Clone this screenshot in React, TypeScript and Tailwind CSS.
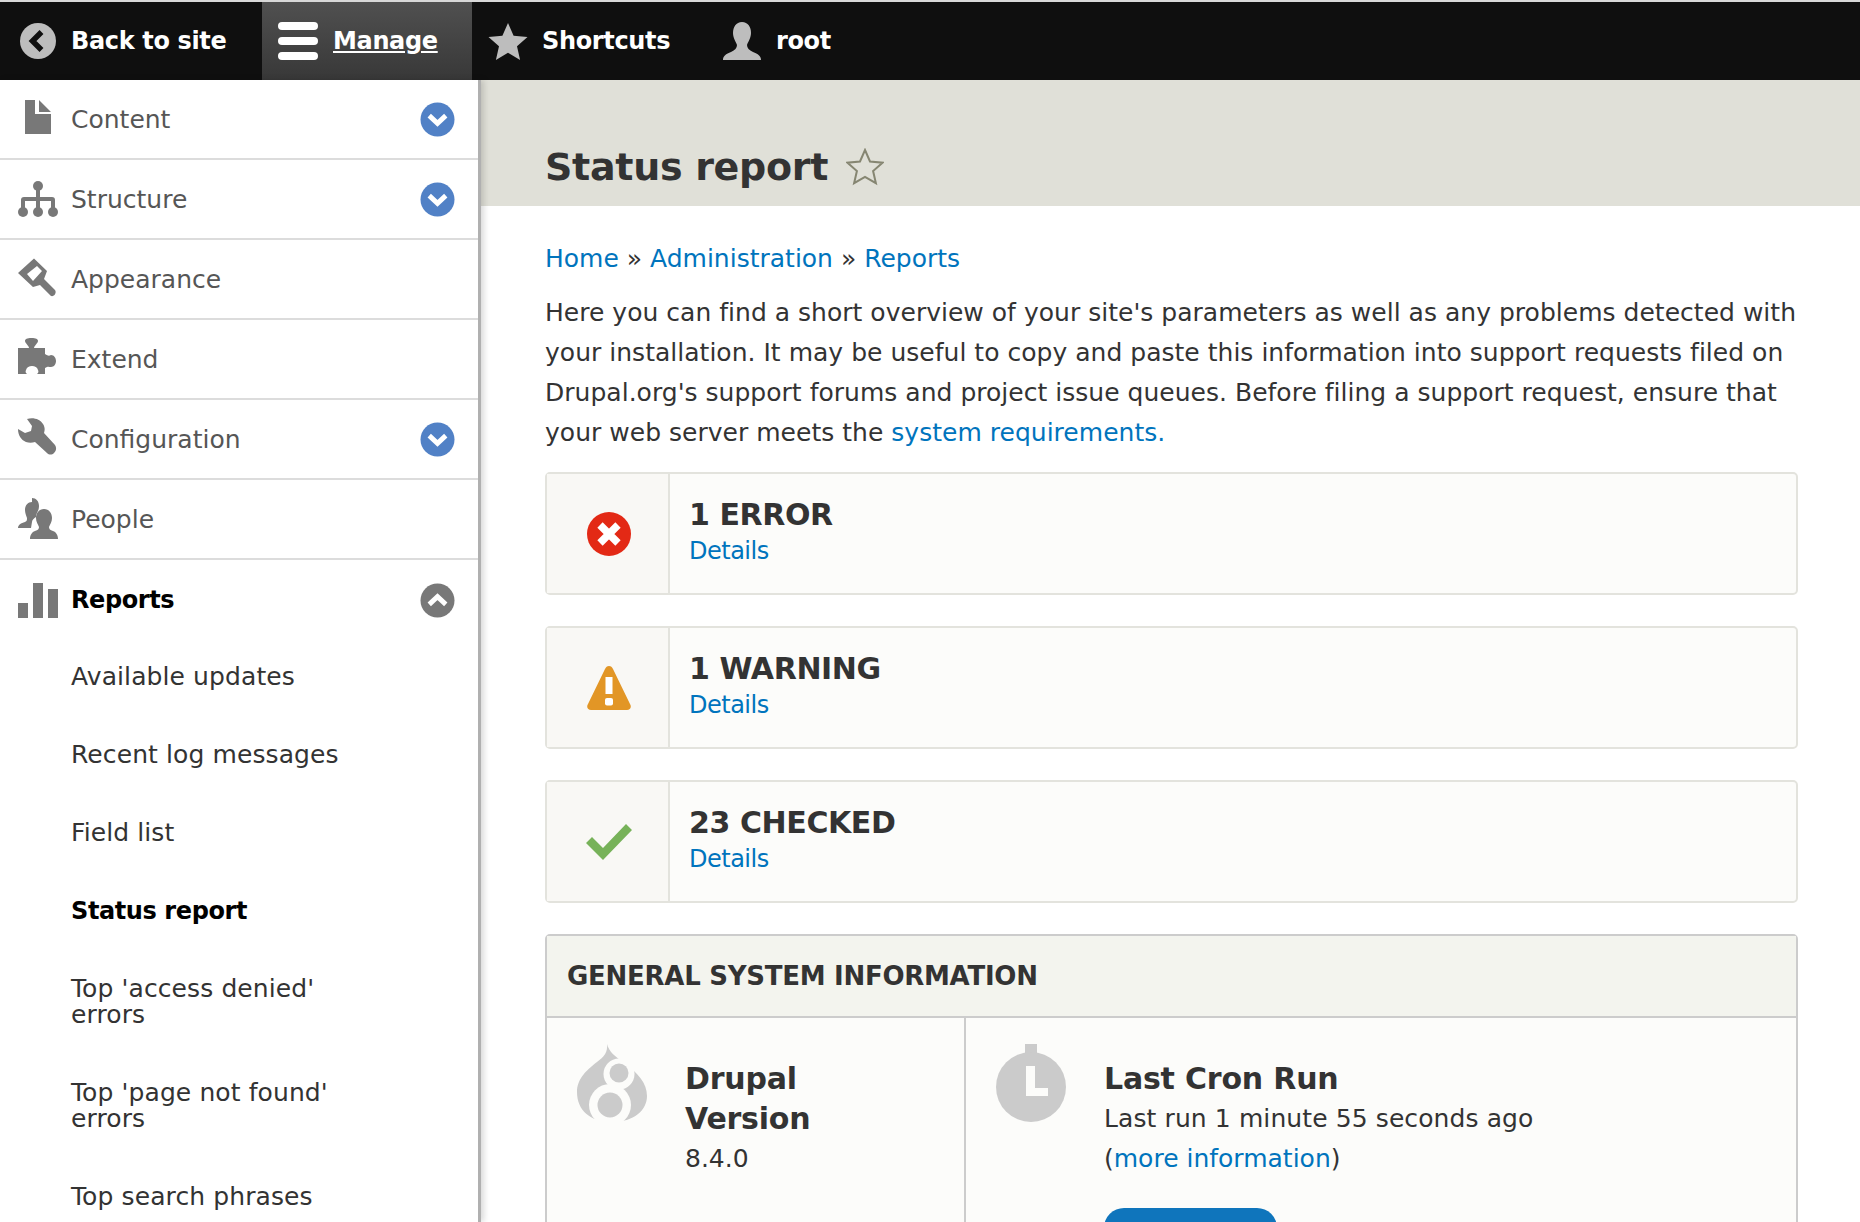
import type { ReactNode } from "react";

const Chevron = ({ up }: { up?: boolean }) => (
  <svg viewBox="0 0 36 36" className="size-[35px]">
    <circle cx="18" cy="18" r="17.5" fill={up ? "#787878" : "#5181c6"} />
    <path d={up ? "M9.5 22l8.5-8 8.5 8" : "M9.5 14l8.5 8 8.5-8"} fill="none" stroke="#fff" strokeWidth="5" />
  </svg>
);

const icons: Record<string, ReactNode> = {
  Content: <path d="M7 2h10v14h16v20H7z M21 2l12 12H21z" />,
  Structure: (
    <>
      <circle cx="20" cy="8" r="5" />
      <circle cx="5" cy="34" r="5" />
      <circle cx="20" cy="34" r="5" />
      <circle cx="35" cy="34" r="5" />
      <path d="M18 10h4v9h12a3 3 0 0 1 3 3v10h-4v-9H22v9h-4v-9H7v9H3V22a3 3 0 0 1 3-3h12z" />
    </>
  ),
  Appearance: <path fillRule="evenodd" d="M0 15L16 .5 29 13l-3 8 11 11c2 3-1 7-4 6L22 27l-7 2z M9 16l10-8 5 5-9 10z" />,
  Extend: <path d="M0 10h11c0-2-4-5-4-7 0-2 2-3 6.500-3s6.500 1 6.500 3c0 2-4 5-4 7h11v6c3 2 4 2 6 1 3 0 5 3 5 6s-2 6-5 6c-2 0-3-1-6 1v6H19c1-1 2-2 1-4-1-3-3-4-6-4s-5 1-6 4c-1 2 0 3 1 4H0z" />,
  Configuration: <path d="M9 1c6-2 13 0 16 5 2 3 2 6 1 9l11 12c2 3 1 6-1 8s-5 2-7 0L17 24c-3 1-6 1-9 0-5-2-8-7-8-13l7 4 6-2 1-5z" />,
  People: (
    <>
      <path d="M14 0c4 0 7 3 7 8 0 3-1 5-2 7-1 2-1 3-1 4-2 1-4 3-4 5l-1 6H0c0-3 3-5 7-6 2-1 2-2 2-4-1-3-2-5-2-8 0-5 3-8 7-8z" />
      <path d="M26 11c5 0 8 4 8 9 0 4-2 6-3 9 0 2 1 3 4 4 3 1 5 4 5 8H12c0-4 2-7 5-8 3-1 4-2 4-4-1-3-3-5-3-9 0-5 3-9 8-9z" />
    </>
  ),
  Reports: <path d="M0 24h10v15H0z M15 4h10v35H15z M30 10h10v29H30z" />,
};

const NavIcon = ({ name }: { name: string }) => (
  <svg viewBox="0 0 40 42" className="h-[42px] w-10 shrink-0" fill="#787878">
    {icons[name]}
  </svg>
);

const navItems = [
  { name: "Content", chevron: true },
  { name: "Structure", chevron: true },
  { name: "Appearance" },
  { name: "Extend" },
  { name: "Configuration", chevron: true },
  { name: "People" },
];

const subItems = [
  ["Available updates"],
  ["Recent log messages"],
  ["Field list"],
  ["Status report"],
  ["Top 'access denied'", "errors"],
  ["Top 'page not found'", "errors"],
  ["Top search phrases"],
];

const Topbar = () => (
  <header className="flex h-20 shrink-0 items-stretch border-t-2 border-[#d8d8d8] bg-[#0f0f0f] text-[24px] leading-none font-bold tracking-[-0.35px] text-white">
    <a className="flex w-[262px] items-center pl-5">
      <svg viewBox="0 0 36 36" className="size-9">
        <circle cx="18" cy="18" r="18" fill="#bdbdbd" />
        <path d="M21.5 9l-9 9 9 9" fill="none" stroke="#0f0f0f" strokeWidth="5.5" />
      </svg>
      <span className="ml-[15px]">Back to site</span>
    </a>
    <a className="flex w-[210px] items-center bg-gradient-to-b from-[#505050] to-[#383838] pl-4">
      <span className="flex w-10 flex-col gap-[7px]">
        <span className="h-2 rounded bg-white" />
        <span className="h-2 rounded bg-white" />
        <span className="h-2 rounded bg-white" />
      </span>
      <span className="ml-[15px] underline underline-offset-2">Manage</span>
    </a>
    <a className="flex w-[235px] items-center pl-4">
      <svg viewBox="0 0 40 38" className="h-[38px] w-10">
        <path d="M20 1l5.6 12.8 13.9 1.3-10.5 9.2 3.1 13.6L20 30.8 7.9 37.9 11 24.3.5 15.1l13.9-1.3z" fill="#bdbdbd" />
      </svg>
      <span className="ml-[14px]">Shortcuts</span>
    </a>
    <a className="flex items-center pl-4">
      <svg viewBox="0 0 38 38" className="size-[38px]">
        <path d="M19 0c6 0 9 5 9 11 0 5-3 9-4 12 0 3 2 5 6 7 5 2 8 4 8 8H0c0-4 3-6 8-8 4-2 6-4 6-7-1-3-4-7-4-12 0-6 3-11 9-11z" fill="#bdbdbd" />
      </svg>
      <span className="ml-[15px]">root</span>
    </a>
  </header>
);

const Sidebar = () => (
  <aside className="relative z-10 w-[481px] shrink-0 border-r-[3px] border-[#b0b0b0] bg-white text-[25px] text-[#565656] shadow-[3px_0_6px_rgba(0,0,0,0.15)]">
    <ul>
      {navItems.map(({ name, chevron }) => (
        <li key={name} className="flex h-20 items-center border-b-2 border-[#dcdcdc] pr-[23px] pl-[18px]">
          <NavIcon name={name} />
          <span className="ml-[13px] flex-1 pt-[2px]">{name}</span>
          {chevron && <Chevron />}
        </li>
      ))}
      <li className="flex h-20 items-center pr-[23px] pl-[18px] text-[24px] font-bold tracking-[-0.4px] text-black">
        <NavIcon name="Reports" />
        <span className="ml-[13px] flex-1">Reports</span>
        <Chevron up />
      </li>
    </ul>
    <ul className="-mt-[2px] pl-[71px] leading-[26px] tracking-[0.1px] text-[#333]">
      {subItems.map((lines) => (
        <li key={lines[0]} className={`py-[26px] ${lines[0] === "Status report" ? "text-[24px] font-bold tracking-[-0.4px] text-black" : ""}`}>
          {lines.map((line) => (
            <div key={line}>{line}</div>
          ))}
        </li>
      ))}
    </ul>
  </aside>
);

const summaries = [
  {
    title: "1 ERROR",
    icon: (
      <svg viewBox="0 0 44 44" className="size-11">
        <circle cx="22" cy="22" r="22" fill="#e32915" />
        <path d="M13 13l18 18M31 13L13 31" stroke="#fff" strokeWidth="7.5" />
      </svg>
    ),
  },
  {
    title: "1 WARNING",
    icon: (
      <svg viewBox="0 0 44 44" className="size-11">
        <path d="M22 0c2 0 3 1 4 3l17 35c2 3 0 6-3 6H4c-3 0-5-3-3-6L18 3c1-2 2-3 4-3z" fill="#e29626" />
        <rect x="18.5" y="11" width="7" height="17" fill="#fff" />
        <rect x="18" y="32" width="8" height="7.5" rx="2" fill="#fff" />
      </svg>
    ),
  },
  {
    title: "23 CHECKED",
    icon: (
      <svg viewBox="0 0 46 36" className="h-9 w-[46px]">
        <path d="M0 19l6-6 11 11L40 0l6 6-29 30z" fill="#77b259" />
      </svg>
    ),
  },
];

const SummaryCard = ({ title, icon }: { title: string; icon: ReactNode }) => (
  <div className="flex h-[123px] rounded-[5px] border-2 border-[#e3e3dd] bg-[#fcfcfa]">
    <div className="flex w-[123px] shrink-0 items-center justify-center border-r-2 border-[#e3e3dd] bg-[#f9f8f5] pl-[2px]">{icon}</div>
    <div className="pt-[21px] pl-[19px]">
      <div className="text-[30px] leading-10 font-bold tracking-[-0.4px] text-[#333]">{title}</div>
      <a className="block text-[24px] leading-[33px] tracking-[-0.5px] text-[#0074bd]">Details</a>
    </div>
  </div>
);

const Main = () => (
  <main className="min-w-0 flex-1 text-[25px] text-[#333]">
    <div className="flex h-[126px] items-end bg-[#e0e0d8] pb-[13px] pl-[64px]">
      <h1 className="text-[38px] leading-[52px] font-bold tracking-[-0.3px]">Status report</h1>
      <svg viewBox="0 0 38 38" className="mb-[7px] ml-[18px] size-[38px]">
        <path d="M19 2l5 11.5 12.5 1.2-9.4 8.3 2.8 12.2L19 28.8 8.100 35.200l2.800-12.200-9.400-8.300L14 13.500z" fill="none" stroke="#868672" strokeWidth="2" />
      </svg>
    </div>
    <div className="pt-[33px] pr-[62px] pl-[64px]">
      <nav className="leading-10">
        <a className="text-[#0074bd]">Home</a> » <a className="text-[#0074bd]">Administration</a> » <a className="text-[#0074bd]">Reports</a>
      </nav>
      <p className="mt-[14px] -mr-1 leading-10 tracking-[0.02px]">
        Here you can find a short overview of your site's parameters as well as any problems detected with your installation. It may be useful to copy and paste this information into support requests filed on Drupal.org's support forums and project issue queues. Before filing a support request, ensure that your web server meets the <a className="text-[#0074bd]">system requirements.</a>
      </p>
      <div className="mt-[19px] flex flex-col gap-[31px]">
        {summaries.map((s) => (
          <SummaryCard key={s.title} {...s} />
        ))}
      </div>
      <section className="mt-[31px] rounded-t-[5px] border-2 border-[#ccc] bg-[#fcfcfa]">
        <h2 className="flex h-[82px] items-center border-b-2 border-[#ccc] bg-[#f3f4ee] pt-[1px] pl-5 text-[26px] font-bold tracking-[-0.27px]">GENERAL SYSTEM INFORMATION</h2>
        <div className="flex h-[400px]">
          <div className="flex w-[419px] border-r-2 border-[#ccc] pt-[26px] pl-[30px]">
            <svg viewBox="0 0 70 78" className="h-[78px] w-[70px] shrink-0">
              <path fill="#cbcbcb" d="M30 0c2 8 8 12 17 19 14 10 23 20 23 33 0 14-13 26-35 26S0 66 0 48c0-14 11-23 20-30 7-5 11-10 10-18z" />
              <circle cx="33" cy="61" r="21" fill="#fcfcfa" />
              <circle cx="42" cy="30" r="15.500" fill="#fcfcfa" />
              <circle cx="42" cy="29" r="9.500" fill="#cbcbcb" />
              <circle cx="33" cy="61" r="12.500" fill="#cbcbcb" />
            </svg>
            <div className="ml-[38px] pt-[15px]">
              <h3 className="text-[30px] leading-10 font-bold tracking-[-0.2px]">
                Drupal
                <br />
                Version
              </h3>
              <div className="leading-10">8.4.0</div>
            </div>
          </div>
          <div className="flex pt-[26px] pl-[30px]">
            <svg viewBox="0 0 70 78" className="h-[78px] w-[70px] shrink-0">
              <rect x="29" width="12" height="14" fill="#cbcbcb" />
              <circle cx="35" cy="43" r="35" fill="#cbcbcb" />
              <path d="M30 22h9v22h13v8H30z" fill="#fcfcfa" />
            </svg>
            <div className="ml-[38px] pt-[15px]">
              <h3 className="text-[30px] leading-10 font-bold tracking-[-0.2px]">Last Cron Run</h3>
              <div className="leading-10 tracking-[0.1px]">Last run 1 minute 55 seconds ago</div>
              <div className="leading-10">
                (<a className="text-[#0074bd]">more information</a>)
              </div>
              <div className="mt-[29px] h-[58px] w-[173px] rounded-[20px] bg-[#0f75bc]" />
            </div>
          </div>
        </div>
      </section>
    </div>
  </main>
);

export default function App() {
  return (
    <div className="flex h-[1222px] flex-col overflow-hidden bg-white font-['DejaVu_Sans',sans-serif]">
      <Topbar />
      <div className="flex min-h-0 flex-1">
        <Sidebar />
        <Main />
      </div>
    </div>
  );
}
